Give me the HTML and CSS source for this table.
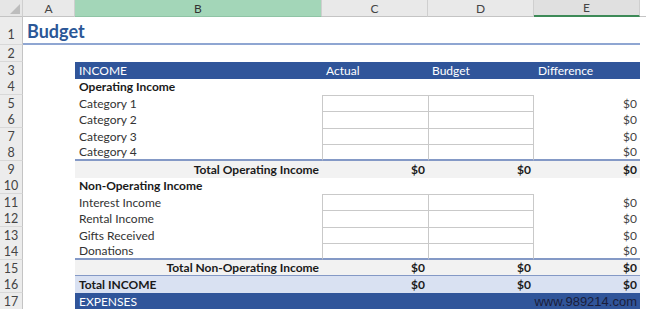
FILE: index.html
```html
<!DOCTYPE html>
<html>
<head>
<meta charset="utf-8">
<link rel="stylesheet" href="styles.css">
</head>
<body>
<div class="sheet">
  <div class="row colhead">
    <div class="corner"></div>
    <div class="ch">A</div>
    <div class="ch sel">B</div>
    <div class="ch">C</div>
    <div class="ch">D</div>
    <div class="ch act">E</div>
    <div class="ch fill"></div>
  </div>
  <div class="row r1">
    <div class="rh">1</div>
    <div class="title">Budget</div>
  </div>
  <div class="row r2">
    <div class="rh">2</div>
  </div>
  <div class="row band">
    <div class="rh">3</div><div></div>
    <div class="t">INCOME</div><div class="t">Actual</div><div class="t">Budget</div><div class="t">Difference</div>
  </div>
  <div class="row">
    <div class="rh">4</div><div></div>
    <div class="t bold">Operating Income</div><div class="t"></div><div class="t"></div><div class="t"></div>
  </div>
  <div class="row">
    <div class="rh">5</div><div></div>
    <div class="t">Category 1</div><div class="t box"></div><div class="t box d"></div><div class="t num">$0</div>
  </div>
  <div class="row">
    <div class="rh">6</div><div></div>
    <div class="t">Category 2</div><div class="t box"></div><div class="t box d"></div><div class="t num">$0</div>
  </div>
  <div class="row">
    <div class="rh">7</div><div></div>
    <div class="t">Category 3</div><div class="t box"></div><div class="t box d"></div><div class="t num">$0</div>
  </div>
  <div class="row sep">
    <div class="rh">8</div><div></div>
    <div class="t">Category 4</div><div class="t box"></div><div class="t box d"></div><div class="t num">$0</div>
  </div>
  <div class="row total">
    <div class="rh">9</div><div></div>
    <div class="t num bold">Total Operating Income</div><div class="t num bold">$0</div><div class="t num bold">$0</div><div class="t num bold">$0</div>
  </div>
  <div class="row">
    <div class="rh">10</div><div></div>
    <div class="t bold">Non-Operating Income</div><div class="t"></div><div class="t"></div><div class="t"></div>
  </div>
  <div class="row">
    <div class="rh">11</div><div></div>
    <div class="t">Interest Income</div><div class="t box"></div><div class="t box d"></div><div class="t num">$0</div>
  </div>
  <div class="row">
    <div class="rh">12</div><div></div>
    <div class="t">Rental Income</div><div class="t box"></div><div class="t box d"></div><div class="t num">$0</div>
  </div>
  <div class="row">
    <div class="rh">13</div><div></div>
    <div class="t">Gifts Received</div><div class="t box"></div><div class="t box d"></div><div class="t num">$0</div>
  </div>
  <div class="row sep">
    <div class="rh">14</div><div></div>
    <div class="t">Donations</div><div class="t box"></div><div class="t box d"></div><div class="t num">$0</div>
  </div>
  <div class="row total sep">
    <div class="rh">15</div><div></div>
    <div class="t num bold">Total Non-Operating Income</div><div class="t num bold">$0</div><div class="t num bold">$0</div><div class="t num bold">$0</div>
  </div>
  <div class="row grand">
    <div class="rh">16</div><div></div>
    <div class="t bold">Total INCOME</div><div class="t num bold">$0</div><div class="t num bold">$0</div><div class="t num bold">$0</div>
  </div>
  <div class="row band">
    <div class="rh">17</div><div></div>
    <div class="t">EXPENSES</div><div class="t"></div><div class="t"></div><div class="t num"><span class="wm">www.989214.com</span></div>
  </div>
</div>
</body>
</html>
```

FILE: styles.css
```css
* { box-sizing: border-box; }
html, body { margin: 0; padding: 0; background: #ffffff; }
body { font-family: Lato, "Open Sans", "Liberation Sans", sans-serif; }

.sheet { width: 646px; height: 309px; overflow: hidden; background: #fff; }

.row {
  display: grid;
  grid-template-columns: 23px 52px 247px 106px 106px 106px 6px;
  height: 16.47px;
}
.row > div {
  display: flex;
  align-items: center;
  white-space: nowrap;
  font-size: 12px;
  color: #333;
  min-width: 0;
}

/* column headers */
.colhead { height: 17px; }
.colhead > div {
  background: #e9e9e9;
  border-right: 1px solid #cfcfcf;
  border-bottom: 1px solid #c4c4c4;
  justify-content: center;
  color: #444;
  font-size: 12px;
}
.colhead > .corner { position: relative; background: #e6e6e6; }
.corner::after {
  content: "";
  position: absolute;
  right: 2px;
  bottom: 2px;
  border-style: solid;
  border-width: 0 0 10px 10px;
  border-color: transparent transparent #bdbdbd transparent;
}
.colhead > .sel { background: #a3d6b8; color: #333; border-bottom-color: #8fc4a5; }
.colhead > .act { background: #e0e0e0; border-bottom: 2px solid #3d8a57; }
.colhead > .fill { background: #fff; border: 0; border-bottom: 1px solid #c4c4c4; }

/* row headers */
.row > .rh {
  background: #ececec;
  border-right: 1px solid #c4c4c4;
  border-bottom: 1px solid #d8d8d8;
  justify-content: center;
  color: #444;
  font-size: 12.5px;
  padding-top: 1px;
}

.r1 { height: 28px; }
.r1 > .rh { align-items: flex-end; padding-bottom: 2px; }
.r2 { height: 17px; }

.row > .title {
  grid-column: 2 / 7;
  align-items: flex-end;
  padding: 0 0 1px 4px;
  font-size: 18px;
  font-weight: 700;
  color: #2b5797;
  border-bottom: 2px solid #8fa6d2;
}

/* table cells */
.row > .t { padding: 0 3px 0 4px; }
.row > .bold { font-weight: 700; color: #1a1a1a; }
.row > .num { justify-content: flex-end; color: #444; }
.row > .num.bold { color: #1a1a1a; }

.row > .box { border-left: 1px solid #c9c9c9; border-top: 1px solid #c9c9c9; }
.row > .box.d { border-right: 1px solid #c9c9c9; }

.band > .t { background: #30559a; color: #fff; }
.total > .t { background: #f2f2f2; }
.grand > .t { background: #d9e1f2; }
.sep > .t { border-bottom: 2px solid #8499c6; }

.wm {
  font-family: "Liberation Sans", Arial, sans-serif;
  font-size: 13px;
  color: #1b1e3a;
}
```
